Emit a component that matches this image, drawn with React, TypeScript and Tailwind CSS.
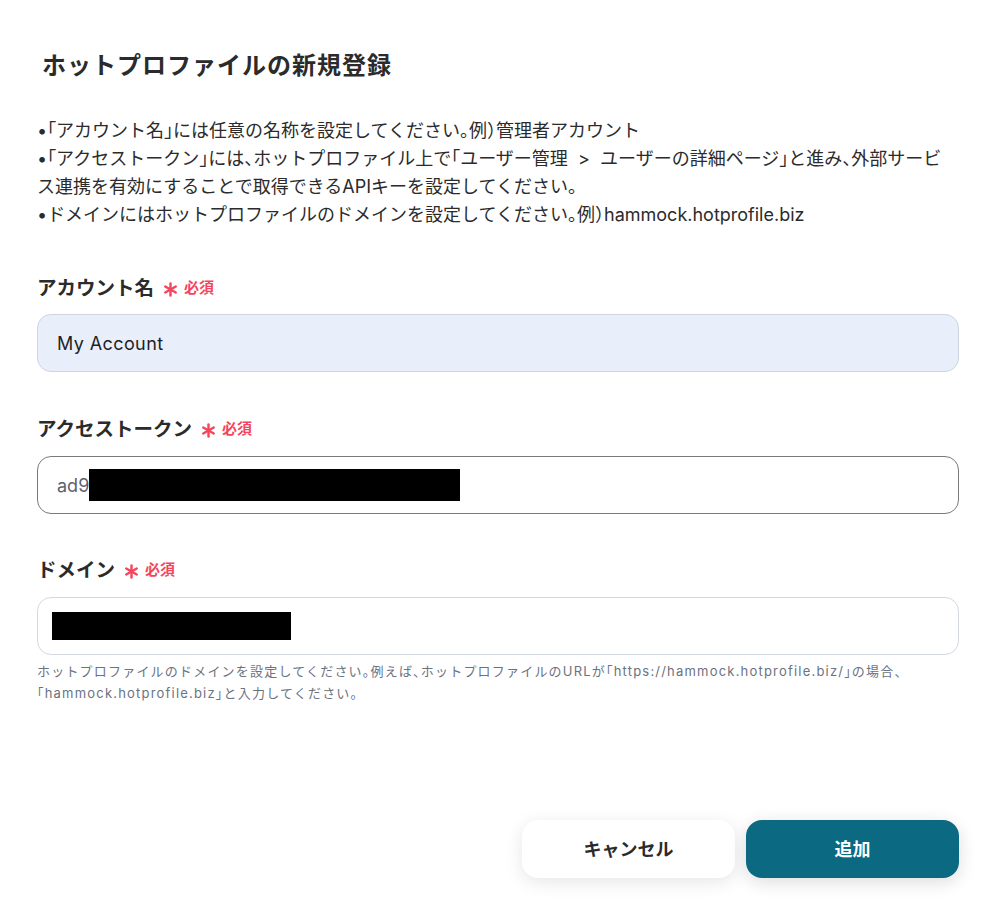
import React from "react";

const Required = () => (
  <span className="ml-[9px] inline-flex items-center gap-[6px] text-[#f5455c]">
    <svg width="15" height="15" viewBox="0 0 16 16" className="translate-y-[1px]">
      <g stroke="#f5455c" strokeWidth="2.6" strokeLinecap="round">
        <line x1="8" y1="1.5" x2="8" y2="14.5" />
        <line x1="2.4" y1="4.8" x2="13.6" y2="11.2" />
        <line x1="2.4" y1="11.2" x2="13.6" y2="4.8" />
      </g>
    </svg>
    <span className="text-[15px] font-bold">必須</span>
  </span>
);

const Label = ({ children }: { children: React.ReactNode }) => (
  <div className="flex items-center text-[19.5px] font-bold leading-[28px] text-[#2b2b2b]">
    {children}
    <Required />
  </div>
);

export default function App() {
  return (
    <div
      className="min-h-[902px] w-[989px] bg-white text-[#2b2b2b] [font-feature-settings:'halt']"
      style={{ fontFamily: 'Inter, "Noto Sans CJK JP", "Noto Sans", sans-serif' }}
    >
      <div className="pl-[37px] pr-[30px] pt-[50px]">
        <h1 className="pl-[5px] text-[24px] font-bold leading-[32px] tracking-[1px] text-[#2b2b2b]">
          ホットプロファイルの新規登録
        </h1>

        <div className="mt-[35px] text-[18px] leading-[28px] text-[#2b2b2b]">
          <p>•「アカウント名」には任意の名称を設定してください。例）管理者アカウント</p>
          <p>
            {"•「アクセストークン」には、ホットプロファイル上で「ユーザー管理\u00a0\u00a0>\u00a0\u00a0ユーザーの詳細ページ」と進み、外部サービス連携を有効にすることで取得できるAPIキーを設定してください。"}
          </p>
          <p>•ドメインにはホットプロファイルのドメインを設定してください。例）hammock.hotprofile.biz</p>
        </div>

        <div className="mt-[45px]">
          <Label>アカウント名</Label>
          <div className="mt-[12px] flex h-[58px] items-center rounded-[14px] border border-[#cdd5e0] bg-[#e8effb] px-[19px] text-[18px] tracking-[0.4px] text-[#1f1f1f]">
            My Account
          </div>
        </div>

        <div className="mt-[43px]">
          <Label>アクセストークン</Label>
          <div className="mt-[13px] flex h-[58px] items-center rounded-[14px] border border-[#7a7a7a] bg-white px-[19px] text-[18px] text-[#5b6270]">
            <span className="w-[32px]">ad9</span>
            <span className="h-[32px] w-[371px] bg-black" />
          </div>
        </div>

        <div className="mt-[42px]">
          <Label>ドメイン</Label>
          <div className="mt-[13px] flex h-[58px] items-center rounded-[14px] border border-[#d3d8e0] bg-white px-[14px]">
            <span className="h-[28px] w-[239px] bg-black" />
          </div>
          <p className="mt-[5px] text-[13px] leading-[22px] tracking-[1.2px] text-[#6b7280]">
            ホットプロファイルのドメインを設定してください。例えば、ホットプロファイルのURLが「https://hammock.hotprofile.biz/」の場合、
            <br />
            「hammock.hotprofile.biz」と入力してください。
          </p>
        </div>

        <div className="mt-[116px] flex justify-end gap-[11px]">
          <button className="h-[58px] w-[213px] rounded-[16px] bg-white text-[18px] font-bold text-[#2b2b2b] shadow-[0_4px_18px_rgba(0,0,0,0.10)]">
            キャンセル
          </button>
          <button className="h-[58px] w-[213px] rounded-[16px] bg-[#0b6982] text-[18px] font-bold text-white shadow-[0_4px_18px_rgba(0,0,0,0.14)]">
            追加
          </button>
        </div>
      </div>
    </div>
  );
}
